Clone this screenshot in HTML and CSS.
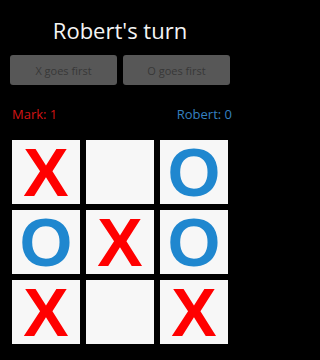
FILE: index.html
```html
<!DOCTYPE html>
<html>
<head>
<meta charset="utf-8">
<link rel="stylesheet" href="styles.css">
</head>
<body>
<div class="app">
  <h1 class="title">Robert's turn</h1>
  <div class="buttons">
    <button class="btn">X goes first</button>
    <button class="btn">O goes first</button>
  </div>
  <div class="scores">
    <span class="score score-x">Mark: 1</span>
    <span class="score score-o">Robert: 0</span>
  </div>
  <div class="board">
    <div class="cell"><span class="mark x">X</span></div>
    <div class="cell"></div>
    <div class="cell"><span class="mark o">O</span></div>
    <div class="cell"><span class="mark o">O</span></div>
    <div class="cell"><span class="mark x">X</span></div>
    <div class="cell"><span class="mark o">O</span></div>
    <div class="cell"><span class="mark x">X</span></div>
    <div class="cell"></div>
    <div class="cell"><span class="mark x">X</span></div>
  </div>
</div>
</body>
</html>
```

FILE: styles.css
```css
html, body {
  margin: 0;
  padding: 0;
  background: #000;
}
.app {
  width: 240px;
  height: 360px;
  display: flex;
  flex-direction: column;
  font-family: "Open Sans", "DejaVu Sans", sans-serif;
  color: #fff;
}
.title {
  margin: 0;
  padding-top: 15px;
  font-size: 22px;
  font-weight: normal;
  line-height: 30px;
  text-align: center;
  color: #f4f4f4;
}
.buttons {
  display: flex;
  gap: 6px;
  padding: 0 10px;
  margin-top: 10px;
}
.btn {
  flex: 1;
  height: 30px;
  border: none;
  border-radius: 3px;
  background: #575757;
  color: #383838;
  font-family: "Open Sans", "DejaVu Sans", sans-serif;
  font-size: 11px;
  padding: 0;
}
.scores {
  display: flex;
  justify-content: space-between;
  padding: 0 8px 0 12px;
  margin-top: 20px;
  font-size: 13px;
  line-height: 18px;
}
.score-x { color: #d41414; }
.score-o { color: #3580c0; }
.board {
  display: grid;
  grid-template-columns: 68px 68px 68px;
  grid-template-rows: 64px 64px 64px;
  column-gap: 6px;
  row-gap: 6px;
  padding-left: 12px;
  margin-top: 17px;
}
.cell {
  background: #f7f7f7;
  display: flex;
  align-items: center;
  justify-content: center;
}
.mark {
  font-family: "Liberation Sans", Arial, sans-serif;
  font-weight: bold;
  font-size: 68px;
  line-height: 68px;
}
.x { color: #ff0000; }
.o { color: #1f87cf; }
```
